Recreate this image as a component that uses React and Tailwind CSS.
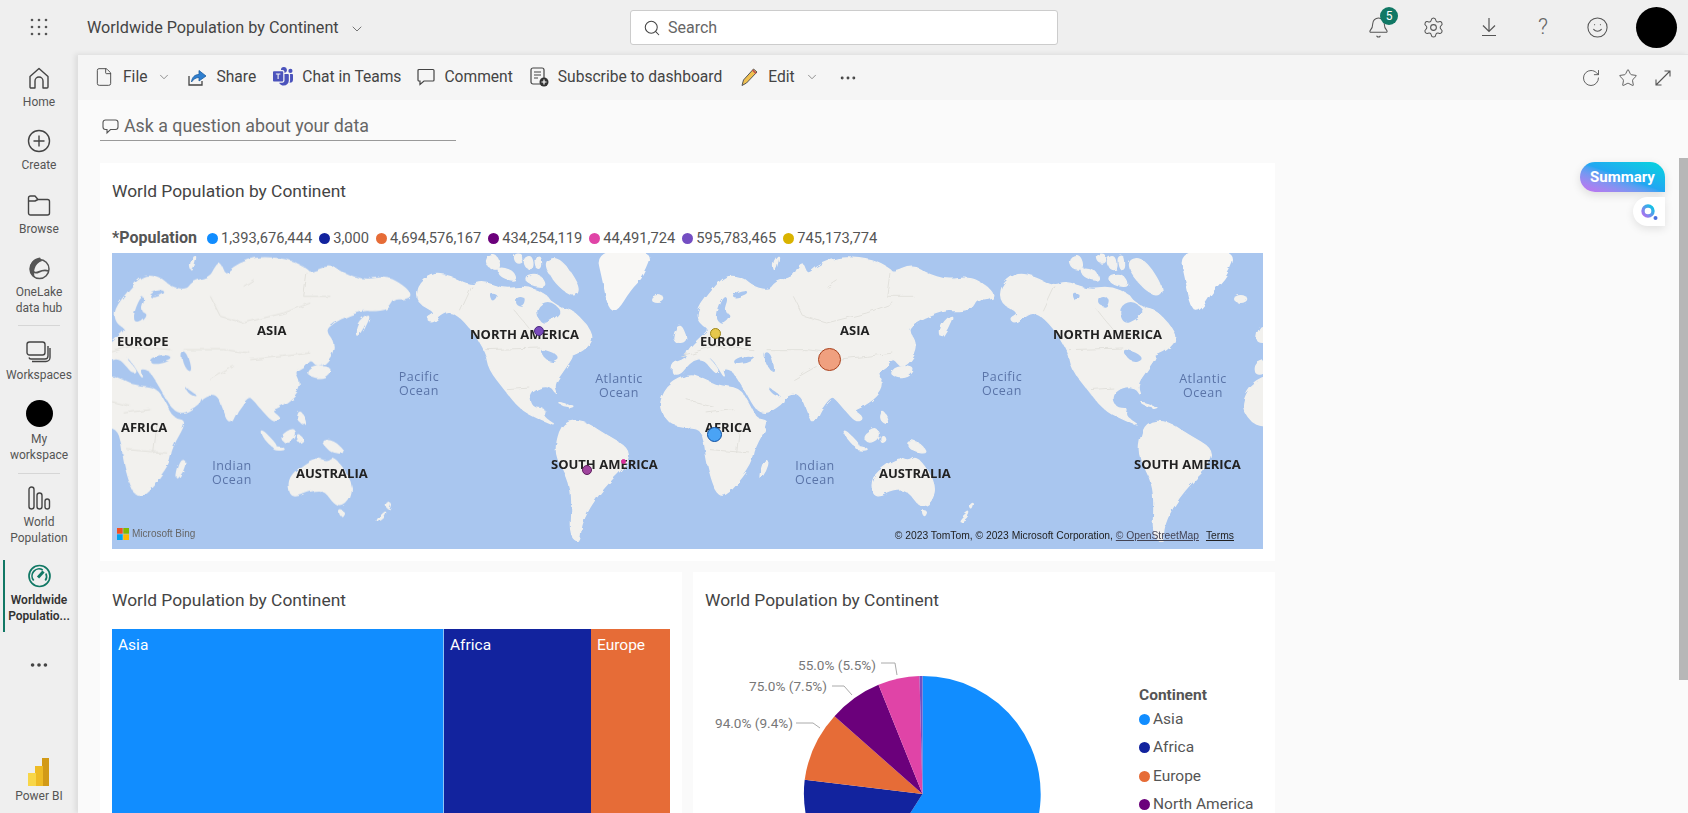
import { Bell, ChevronDown, Ellipsis, File, RotateCw, Search, Settings, Smile, Star } from 'lucide-react'
import { BsMicrosoftTeams } from 'react-icons/bs'

const LAND = '#f2f1ee'
const WATER = '#a9c6ef'
const LINE = '#e2e1dc'

// rounds the corners of a polygon outline so the coasts don't look cut with scissors
const smooth = (d) =>
  d
    .split('Z')
    .filter((s) => s.trim())
    .map((sub) => {
      const n = sub.match(/-?\d+(\.\d+)?/g).map(Number)
      const pts = []
      for (let i = 0; i < n.length; i += 2) pts.push([n[i], n[i + 1]])
      const mid = (a, b) => `${(a[0] + b[0]) / 2} ${(a[1] + b[1]) / 2}`
      let out = `M${mid(pts[pts.length - 1], pts[0])}`
      pts.forEach((p, i) => {
        out += ` Q${p[0]} ${p[1]} ${mid(p, pts[(i + 1) % pts.length])}`
      })
      return `${out} Z`
    })
    .join(' ')

const EURASIA =
  'M36 362 L38 330 L75 320 L85 290 L120 255 L150 228 L118 210 L112 170 L160 108 L200 66 L250 76 L285 105 L330 112 L345 88 L400 72 L412 48 L428 26 L442 68 L470 42 L510 22 L560 12 L640 22 L690 48 L700 62 L760 36 L800 62 L860 82 L930 72 L978 98 L1004 126 L985 138 L950 136 L935 168 L885 174 L862 170 L800 192 L760 215 L745 235 L772 270 L762 312 L725 348 L700 312 L680 340 L650 355 L672 395 L650 432 L600 465 L580 472 L612 495 L590 508 L555 470 L530 440 L515 428 L480 470 L460 518 L440 470 L425 430 L400 420 L370 435 L368 452 L300 492 L245 395 L225 365 L215 350 L185 345 L197 378 L170 335 L160 320 L140 308 L178 352 L165 360 L130 315 L100 320 L75 345 L60 364 Z'
const AFRICA =
  'M2 440 L28 393 L90 363 L140 383 L170 398 L238 405 L265 450 L290 500 L330 503 L282 585 L277 632 L215 712 L180 734 L158 690 L140 620 L135 570 L120 525 L70 520 L30 512 L2 472 Z'
const OLD_WORLD_ISLANDS =
  'M38 250 L60 208 L88 266 L50 274 Z M296 684 L310 624 L326 622 L318 654 Z M688 366 L710 340 L768 343 L740 378 Z M840 258 L843 214 L882 180 L862 228 Z M552 528 L602 578 L590 587 L554 546 Z M590 578 L632 590 L590 592 Z M610 550 L652 523 L657 556 L625 572 Z M663 543 L682 560 L663 572 Z M670 468 L692 522 L658 500 Z M733 563 L770 563 L808 602 L760 597 Z M345 60 L360 0 L338 30 Z M893 808 L930 770 L920 797 Z M929 757 L942 748 L936 772 Z M786 772 L802 776 L792 792 Z'
const AUSTRALIA =
  'M633 692 L650 658 L715 613 L750 628 L770 608 L828 690 L816 748 L780 763 L745 712 L705 710 L645 737 Z'
const OLD_WORLD_SEAS =
  'M165 195 L190 130 L205 135 L190 175 L215 185 L185 215 Z M220 320 L260 305 L290 315 L265 330 L225 335 Z M310 298 L332 298 L347 362 L320 342 Z M320 398 L368 432 L338 426 Z M215 125 L250 108 L268 120 L225 137 Z'
const NORTH_AMERICA =
  'M2 100 L45 62 L100 68 L160 100 L200 84 L260 110 L330 100 L388 125 L395 140 L435 168 L472 173 L535 250 L502 292 L450 312 L472 305 L440 352 L410 395 L422 428 L405 402 L370 400 L335 425 L345 466 L385 466 L375 490 L418 518 L400 512 L355 492 L310 467 L265 412 L215 347 L208 300 L160 222 L110 176 L80 180 L45 212 L28 195 L60 180 L2 150 Z'
const ARCTIC =
  'M205 15 L240 3 L252 50 L215 47 Z M240 42 L288 52 L300 86 L250 72 Z M320 15 L345 8 L350 48 L325 45 Z M352 12 L372 8 L375 50 L358 48 Z M382 22 L430 13 L494 110 L462 134 L400 72 Z M320 70 L365 60 L392 102 L340 97 Z M290 5 L315 2 L318 30 L296 30 Z'
const CARIBBEAN = 'M418 445 L467 460 L440 460 Z M455 460 L475 462 L460 468 Z'
const SOUTH_AMERICA =
  'M418 568 L438 508 L500 503 L560 543 L642 590 L622 642 L580 682 L530 742 L492 812 L488 876 L458 842 L463 760 L458 690 L418 612 Z'
const NEW_WORLD_SEAS =
  'M355 165 L395 140 L435 172 L410 200 L370 215 Z M362 285 L410 298 L432 320 L395 332 Z M215 115 L245 125 L225 150 Z M300 130 L330 135 L320 165 L295 155 Z'
const GREENLAND = 'M535 -10 L712 -10 L682 70 L642 110 L600 178 L573 167 L558 90 Z'

// one copy of the world, repeated across the map. coords are 3x map pixels
const World = () => (
  <g id="world">
    <g transform="translate(548 0) scale(.3333)" strokeLinejoin="round">
      <g fill={LAND} stroke={LAND} strokeWidth="4">
        <path d={smooth(EURASIA)} />
        <path d={smooth(AFRICA)} />
        <path d={smooth(OLD_WORLD_ISLANDS)} />
        <path d={smooth(AUSTRALIA)} />
      </g>
      <path fill={WATER} d={smooth(OLD_WORLD_SEAS)} />
      <path fill="none" stroke={LINE} strokeWidth="3" d="M400 130 L430 190 L500 210 L620 180 L700 150 M690 60 L680 130 L760 130 M500 100 L530 80 M320 290 L440 290 L520 300 M520 320 L620 310 L700 300 M140 480 L220 470 M150 590 L270 600 M240 510 L230 600 M400 380 L470 340 M80 440 L160 460 M60 310 L160 280 L280 290" />
    </g>
    <g transform="translate(888 0) scale(.3333)" strokeLinejoin="round">
      <g fill={LAND} stroke={LAND} strokeWidth="4">
        <path d={smooth(NORTH_AMERICA)} />
        <path d={smooth(ARCTIC)} />
        <path d={smooth(CARIBBEAN)} />
        <path d={smooth(SOUTH_AMERICA)} />
      </g>
      <path fill={WATER} d={smooth(NEW_WORLD_SEAS)} />
      <path fill="none" stroke={LINE} strokeWidth="3" d="M205 290 L370 285 M270 410 L340 405 M130 175 L165 100 M290 170 L340 230" />
      <path fill="#f8f7f5" d={smooth(GREENLAND)} />
      <ellipse cx="722" cy="138" rx="20" ry="12" fill={LAND} />
    </g>
  </g>
)

const MAP_LABELS = [
  ['EUROPE', 'left-[5px] top-[78px]'],
  ['ASIA', 'left-[145px] top-[67px]'],
  ['NORTH AMERICA', 'left-[358px] top-[71px]'],
  ['AFRICA', 'left-[9px] top-[164px]'],
  ['AUSTRALIA', 'left-[184px] top-[210px]'],
  ['SOUTH AMERICA', 'left-[439px] top-[201px]'],
  ['EUROPE', 'left-[588px] top-[78px]'],
  ['ASIA', 'left-[728px] top-[67px]'],
  ['NORTH AMERICA', 'left-[941px] top-[71px]'],
  ['AFRICA', 'left-[593px] top-[164px]'],
  ['AUSTRALIA', 'left-[767px] top-[210px]'],
  ['SOUTH AMERICA', 'left-[1022px] top-[201px]'],
]

const OCEANS = [
  ['Pacific', 'left-[277px] top-[117px]'],
  ['Atlantic', 'left-[477px] top-[119px]'],
  ['Indian', 'left-[90px] top-[206px]'],
  ['Pacific', 'left-[860px] top-[117px]'],
  ['Atlantic', 'left-[1061px] top-[119px]'],
  ['Indian', 'left-[673px] top-[206px]'],
]

const MARKERS = [
  'left-[598px] top-[75px] size-[11px] bg-[#e6c84c] border-[#9b8415]',
  'left-[595px] top-[174px] size-[15px] bg-[#4aa3f5] border-[#0d4ea0]',
  'left-[706px] top-[95px] size-[23px] bg-[#f0a07f] border-[#a8401c]',
  'left-[422px] top-[73px] size-[10px] bg-[#7a4bbd] border-[#4a2a80]',
  'left-[470px] top-[212px] size-[10px] bg-[#a0449e] border-[#5e1f5c]',
  'left-[509px] top-[206px] size-[5px] bg-[#d6309a] border-[#d6309a]',
]

const LEGEND = [
  ['bg-[#118dff]', '1,393,676,444'],
  ['bg-[#12239e]', '3,000'],
  ['bg-[#e66c37]', '4,694,576,167'],
  ['bg-[#6b007b]', '434,254,119'],
  ['bg-[#e044a7]', '44,491,724'],
  ['bg-[#744ec2]', '595,783,465'],
  ['bg-[#d9b300]', '745,173,774'],
]

const PIE_LEGEND = [
  ['bg-[#118dff]', 'Asia'],
  ['bg-[#12239e]', 'Africa'],
  ['bg-[#e66c37]', 'Europe'],
  ['bg-[#6b007b]', 'North America'],
]

const Waffle = () => (
  <svg width="18" height="18" viewBox="0 0 18 18" fill="#555">
    {[2, 9, 16].map((y) => [2, 9, 16].map((x) => <circle key={`${x}-${y}`} cx={x} cy={y} r="1.3" />))}
  </svg>
)

const HomeIcon = () => (
  <svg width="24" height="24" viewBox="0 0 24 24" fill="none" stroke="#444" strokeWidth="1.4">
    <path d="M3 10.5 L12 2.5 L21 10.5 V21 a1 1 0 0 1 -1 1 H16 V15 a4 4 0 0 0 -8 0 V22 H4 a1 1 0 0 1 -1 -1 Z" strokeLinejoin="round" />
  </svg>
)

const CreateIcon = () => (
  <svg width="24" height="24" viewBox="0 0 24 24" fill="none" stroke="#444" strokeWidth="1.4">
    <circle cx="12" cy="12" r="10.5" />
    <path d="M12 6.5 V17.5 M6.5 12 H17.5" />
  </svg>
)

const BrowseIcon = () => (
  <svg width="24" height="24" viewBox="0 0 24 24" fill="none" stroke="#444" strokeWidth="1.4">
    <path d="M1.5 20 V5 a2 2 0 0 1 2 -2 H8 L11 6.5 H20.5 a2 2 0 0 1 2 2 V20 a2 2 0 0 1 -2 2 H3.5 a2 2 0 0 1 -2 -2 Z M1.5 8 H8 L11 6.5" strokeLinejoin="round" />
  </svg>
)

const OneLakeIcon = () => (
  <svg width="24" height="24" viewBox="0 0 24 24" fill="none">
    <circle cx="12.5" cy="13" r="9.5" stroke="#555" strokeWidth="1.5" />
    <path d="M13 1.5 C7 2 2.5 7 3 14 C3.5 18 6 21 8 22 C6 16 7 8 15 5 Z" fill="#555" />
    <path d="M6.5 15.5 C10 20 13 12 21.5 15" stroke="#555" strokeWidth="1.8" />
  </svg>
)

const WorkspacesIcon = () => (
  <svg width="26" height="24" viewBox="0 0 26 24" fill="none" stroke="#444" strokeWidth="1.4">
    <rect x="1" y="3" width="18" height="13" rx="2.5" />
    <path d="M3 18.5 a2 2 0 0 0 2 1.5 H19 a3 3 0 0 0 3 -3 V7 M6 22.5 H20 a4 4 0 0 0 4 -4 V9" />
  </svg>
)

const BarsIcon = () => (
  <svg width="24" height="24" viewBox="0 0 24 24" fill="none" stroke="#444" strokeWidth="1.4">
    <rect x="2" y="1" width="5" height="22" rx="2.5" />
    <rect x="10" y="7" width="5" height="16" rx="2.5" />
    <rect x="18" y="13" width="4.5" height="10" rx="2.2" />
  </svg>
)

const GaugeIcon = () => (
  <svg width="25" height="24" viewBox="0 0 24 24" fill="none" stroke="#117865" strokeWidth="1.7">
    <circle cx="12" cy="12" r="10.5" />
    <path d="M6.2 16.5 a7 7 0 0 1 9 -10.5 M18.4 9.5 a7 7 0 0 1 -.6 7" />
    <path d="M10.5 13.5 L16 7.5" strokeWidth="3" />
  </svg>
)

const PowerBiIcon = () => (
  <svg width="24" height="28" viewBox="0 0 24 28">
    <rect x="15" y="0" width="7" height="28" fill="#d29a17" />
    <rect x="8" y="8" width="8" height="20" fill="#eebb25" />
    <rect x="1" y="15" width="8" height="13" fill="#f8d648" />
  </svg>
)

const ShareIcon = () => (
  <svg width="20" height="20" viewBox="0 0 20 20" fill="none">
    <path d="M2 9 V18 H15 V14" stroke="#444" strokeWidth="1.3" />
    <path d="M4.5 15 C5 10 8 7.5 12 7.5 V3.5 L19 9 L12 14 V10.5 C9 10.5 6.5 12 4.5 15 Z" fill="#2f7fd0" stroke="#1d5da0" strokeWidth=".8" />
  </svg>
)

const CommentIcon = () => (
  <svg width="18" height="18" viewBox="0 0 18 18" fill="none" stroke="#444" strokeWidth="1.2">
    <path d="M1 2.5 a1 1 0 0 1 1 -1 H16 a1 1 0 0 1 1 1 V12 a1 1 0 0 1 -1 1 H7 L3 16.5 V13 H2 a1 1 0 0 1 -1 -1 Z" />
  </svg>
)

const SubscribeIcon = () => (
  <svg width="19" height="20" viewBox="0 0 19 20" fill="none">
    <rect x="1" y="1" width="13" height="16" rx="2" stroke="#444" strokeWidth="1.2" />
    <path d="M4 5 H11 M4 8 H11 M4 11 H8" stroke="#444" strokeWidth="1.2" />
    <circle cx="14" cy="15" r="4.5" fill="#333" />
    <path d="M14 12.5 V17.5 M11.5 15 H16.5" stroke="#fff" strokeWidth="1.2" />
  </svg>
)

const PencilIcon = () => (
  <svg width="19" height="20" viewBox="0 0 19 20" fill="none">
    <path d="M3.5 13 L13.5 2 L17 5 L6.5 16 L2 18.5 Z" fill="#f0c050" stroke="#555" strokeWidth="1" />
    <path d="M12.5 3 L16 6.5" stroke="#c05050" strokeWidth="1.6" />
  </svg>
)

const DownloadIcon = () => (
  <svg width="16" height="20" viewBox="0 0 16 20" fill="none" stroke="#555" strokeWidth="1.2">
    <path d="M8 1 V14 M2 8.5 L8 14.5 L14 8.5 M1 18.5 H15" />
  </svg>
)

const ExpandIcon = () => (
  <svg width="16" height="16" viewBox="0 0 16 16" fill="none" stroke="#555" strokeWidth="1.1">
    <path d="M15 1 L1 15 M9.5 1 H15 V6.5 M1 9.5 V15 H6.5" />
  </svg>
)

const SmallComment = () => (
  <svg width="17" height="17" viewBox="0 0 17 17" fill="none" stroke="#555" strokeWidth="1.1">
    <path d="M3.5 2 H13.5 a2.5 2.5 0 0 1 2.5 2.5 V9 a2.5 2.5 0 0 1 -2.5 2.5 H8.5 L5 15 V11.5 H3.5 A2.5 2.5 0 0 1 1 9 V4.5 A2.5 2.5 0 0 1 3.5 2 Z" />
  </svg>
)

const MicrosoftLogo = () => (
  <svg width="12" height="12" viewBox="0 0 12 12">
    <rect width="5.7" height="5.7" fill="#f25022" />
    <rect x="6.3" width="5.7" height="5.7" fill="#7fba00" />
    <rect y="6.3" width="5.7" height="5.7" fill="#00a4ef" />
    <rect x="6.3" y="6.3" width="5.7" height="5.7" fill="#ffb900" />
  </svg>
)

const SummaryMark = () => (
  <svg width="20" height="20" viewBox="0 0 20 20" fill="none">
    <defs>
      <linearGradient id="ring" x1="0" y1="1" x2="1" y2="0">
        <stop offset="0" stopColor="#b56cf0" />
        <stop offset="1" stopColor="#06c8e6" />
      </linearGradient>
    </defs>
    <circle cx="9" cy="9" r="5" stroke="url(#ring)" strokeWidth="3.4" />
    <circle cx="16.5" cy="16" r="2" fill="#4a6fe0" />
  </svg>
)

const RailItem = ({ icon, label, className = '', active = false }) => (
  <div className={`flex flex-col items-center ${className}`}>
    <div className="h-6 flex items-center justify-center">{icon}</div>
    <div className={`mt-1 text-[12px] leading-4 text-center whitespace-pre-line ${active ? 'font-semibold text-[#333]' : 'text-[#555]'}`}>
      {label}
    </div>
  </div>
)

const ToolbarItem = ({ icon, label, className = '', chevron = false }) => (
  <div className={`flex items-center ${className}`}>
    {icon}
    <span className="ml-[9px] mt-[1px] text-[15.6px] text-[#444]">{label}</span>
    {chevron && <ChevronDown size={14} strokeWidth={1.2} className="ml-[10px] text-[#666]" />}
  </div>
)

const CardTitle = ({ children }) => (
  <div className="text-[17.4px] leading-6 text-[#444]">{children}</div>
)

const MapCard = () => (
  <div className="h-[398px] bg-white pt-4 px-3">
    <CardTitle>World Population by Continent</CardTitle>
    <div className="mt-[24px] flex items-center h-[22px] text-[14.7px] text-[#555]">
      <span className="text-[16px] font-bold mr-[10px]">*Population</span>
      {LEGEND.map(([color, value]) => (
        <span key={value} className="flex items-center mr-[7px]">
          <span className={`size-[11px] rounded-full mr-[3px] ${color}`} />
          {value}
        </span>
      ))}
    </div>
    <div className="relative mt-[4px] h-[296px] overflow-hidden bg-[#a9c6ef]">
      <svg className="w-full h-full blur-[0.5px]" viewBox="0 0 1151 296">
        <defs>
          {/* roughens the coast lines a little */}
          <filter id="coast" x="0" y="0" width="100%" height="100%">
            <feTurbulence type="fractalNoise" baseFrequency="0.09" numOctaves="3" seed="4" />
            <feDisplacementMap in="SourceGraphic" scale="5" />
          </filter>
        </defs>
        <g filter="url(#coast)">
          <World />
          <use href="#world" x="-583" />
          <use href="#world" x="583" />
        </g>
      </svg>
      {MAP_LABELS.map(([text, pos]) => (
        <span key={pos} className={`absolute ${pos} font-['Open_Sans',sans-serif] text-[13px] leading-5 font-bold text-[#222] whitespace-nowrap`}>
          {text}
        </span>
      ))}
      {OCEANS.map(([name, pos]) => (
        <span key={pos} className={`absolute ${pos} w-[60px] font-['Open_Sans',sans-serif] text-center text-[12.5px] leading-[14px] tracking-[0.5px] text-[#5a74a8]`}>
          {name}
          <br />
          Ocean
        </span>
      ))}
      {MARKERS.map((cls) => (
        <span key={cls} className={`absolute rounded-full border ${cls}`} />
      ))}
      <div className="absolute left-[5px] bottom-[8px] flex items-center gap-[3px]">
        <MicrosoftLogo />
        <span className="font-['Liberation_Sans',sans-serif] text-[10px] text-[#666]">Microsoft Bing</span>
      </div>
      <div className="absolute right-[29px] bottom-[6px] font-['Liberation_Sans',sans-serif] text-[10.3px] text-[#222] whitespace-nowrap">
        © 2023 TomTom, © 2023 Microsoft Corporation, <span className="underline text-[#445]">© OpenStreetMap</span>
        <span className="underline ml-[7px]">Terms</span>
      </div>
    </div>
  </div>
)

const TreemapCard = () => (
  <div className="w-[582px] h-[400px] bg-white pt-4 px-3">
    <CardTitle>World Population by Continent</CardTitle>
    <div className="mt-[17px] flex h-[300px] text-[15.5px] text-white">
      <div className="w-[332px] bg-[#118dff] border-r border-[#8ec4f5] pl-[6px] pt-[5px]">Asia</div>
      <div className="w-[147px] bg-[#12239e] pl-[6px] pt-[5px]">Africa</div>
      <div className="flex-1 bg-[#e66c37] pl-[6px] pt-[5px]">Europe</div>
    </div>
  </div>
)

const PieCard = () => (
  <div className="w-[582px] h-[400px] bg-white pt-4 px-3">
    <CardTitle>World Population by Continent</CardTitle>
    <div className="mt-[17px] flex">
      <div className="relative w-[434px] h-[300px]">
        {/* center of the pie is at 217.5,165 in this box */}
        <svg className="absolute inset-0" width="434" height="300" viewBox="0 0 434 300" fill="none">
          <path d="M217.5 165 L217.5 47 A118 118 0 1 1 154.1 264.4 Z" fill="#118dff" />
          <path d="M217.5 165 L154.1 264.4 A118 118 0 0 1 99.7 150.7 Z" fill="#12239e" />
          <path d="M217.5 165 L99.7 150.7 A118 118 0 0 1 129.5 87.3 Z" fill="#e66c37" />
          <path d="M217.5 165 L129.5 87.3 A118 118 0 0 1 173.5 55.7 Z" fill="#6b007b" />
          <path d="M217.5 165 L173.5 55.7 A118 118 0 0 1 214.5 47 Z" fill="#e044a7" />
          <path d="M217.5 165 L214.5 47 A118 118 0 0 1 217.5 47 Z" fill="#744ec2" />
          <path d="M91 94 L108 94 L115 99 M127 57 L139 57 L147 66 M176 34 L190 34 L192 46" stroke="#aaa" strokeWidth="1" />
        </svg>
        <span className="absolute left-[93px] top-[26px] text-[13.6px] leading-5 text-[#777] whitespace-nowrap">55.0% (5.5%)</span>
        <span className="absolute left-[44px] top-[47px] text-[13.6px] leading-5 text-[#777] whitespace-nowrap">75.0% (7.5%)</span>
        <span className="absolute left-[10px] top-[84px] text-[13.6px] leading-5 text-[#777] whitespace-nowrap">94.0% (9.4%)</span>
      </div>
      <div className="pt-[56px] text-[15.5px] text-[#555]">
        <div className="font-bold leading-5">Continent</div>
        {PIE_LEGEND.map(([color, label]) => (
          <div key={label} className="flex items-center h-[28.5px] whitespace-nowrap">
            <span className={`size-[11px] rounded-full mr-[3px] ${color}`} />
            {label}
          </div>
        ))}
      </div>
    </div>
  </div>
)

export default function App() {
  return (
    <div className="relative h-screen flex flex-col overflow-hidden bg-[#efefef] font-['Roboto',sans-serif]">
      {/* top bar */}
      <header className="h-[54px] flex-none flex items-center relative">
        <div className="w-[77px] flex justify-center -mt-[1px]">
          <Waffle />
        </div>
        <div className="ml-[10px] mt-[3px] text-[16.2px] text-[#444] whitespace-nowrap">Worldwide Population by Continent</div>
        <ChevronDown size={16} strokeWidth={1.2} className="ml-[10px] mt-[3px] text-[#555]" />
        <div className="absolute left-[630px] top-[10px] w-[428px] h-[35px] flex items-center bg-white border border-[#ccc] rounded-[3px] pl-[12px]">
          <Search size={18} strokeWidth={1.4} className="text-[#444]" />
          <span className="ml-[7px] mt-[1px] text-[16px] text-[#666]">Search</span>
        </div>
        <div className="ml-auto flex items-center mr-[11px]">
          <div className="relative w-[55px] flex justify-center">
            <Bell size={23} strokeWidth={1.1} className="text-[#555]" />
            <span className="absolute left-[29px] -top-[9px] size-[18px] rounded-full bg-[#117865] text-white text-[12px] flex items-center justify-center">5</span>
          </div>
          <div className="w-[55px] flex justify-center">
            <Settings size={23} strokeWidth={1.1} className="text-[#555]" />
          </div>
          <div className="w-[55px] flex justify-center">
            <DownloadIcon />
          </div>
          <div className="w-[54px] text-center text-[22px] font-light leading-6 text-[#666]">?</div>
          <div className="w-[54px] flex justify-center">
            <Smile size={23} strokeWidth={1.1} className="text-[#555]" />
          </div>
          <div className="ml-[12px] size-[41px] rounded-full bg-black" />
        </div>
      </header>

      <div className="flex-1 flex min-h-0">
        {/* left rail */}
        <nav className="relative w-[78px] flex-none flex flex-col">
          <RailItem icon={<HomeIcon />} label="Home" className="mt-[12px]" />
          <RailItem icon={<CreateIcon />} label="Create" className="mt-[19px]" />
          <RailItem icon={<BrowseIcon />} label="Browse" className="mt-[20px]" />
          <RailItem icon={<OneLakeIcon />} label={'OneLake\ndata hub'} className="mt-[19px]" />
          <div className="mt-[9px] mx-[18px] h-px bg-[#d6d6d6]" />
          <RailItem icon={<WorkspacesIcon />} label="Workspaces" className="mt-[13px]" />
          <div className="mt-[17px] mx-auto size-[27px] rounded-full bg-black" />
          <div className="mt-1 text-[12px] leading-4 text-center text-[#555]">
            My
            <br />
            workspace
          </div>
          <div className="mt-[10px] mx-[18px] h-px bg-[#d6d6d6]" />
          <RailItem icon={<BarsIcon />} label={'World\nPopulation'} className="mt-[12px]" />
          <RailItem icon={<GaugeIcon />} label={'Worldwide\nPopulatio...'} active className="mt-[18px]" />
          <Ellipsis size={22} className="mx-auto mt-[30px] text-[#444]" />
          <RailItem icon={<PowerBiIcon />} label="Power BI" className="mt-auto mb-[9px]" />
          <span className="absolute left-[3px] top-[506px] w-[2px] h-[72px] bg-[#117865]" />
        </nav>

        {/* main area */}
        <main className="flex-1 min-w-0 flex flex-col bg-[#fafafa] shadow-[-3px_0_5px_rgba(0,0,0,0.08)] border-t border-[#e4e4e4]">
          <div className="h-[45px] flex-none flex items-center bg-[#f5f5f5] pl-[16px] pr-[17px]">
            <ToolbarItem icon={<File size={20} strokeWidth={1.1} className="text-[#444]" />} label="File" chevron />
            <ToolbarItem icon={<ShareIcon />} label="Share" className="ml-[16px]" />
            <ToolbarItem icon={<BsMicrosoftTeams size={20} className="text-[#4b53bc]" />} label="Chat in Teams" className="ml-[17px]" />
            <ToolbarItem icon={<CommentIcon />} label="Comment" className="ml-[16px]" />
            <ToolbarItem icon={<SubscribeIcon />} label="Subscribe to dashboard" className="ml-[17px]" />
            <ToolbarItem icon={<PencilIcon />} label="Edit" chevron className="ml-[18px]" />
            <Ellipsis size={20} strokeWidth={1.5} className="ml-[19px] text-[#444]" />
            <div className="ml-auto flex items-center gap-[17px]">
              <RotateCw size={20} strokeWidth={1.1} className="text-[#555]" />
              <Star size={20} strokeWidth={1.1} className="text-[#555]" />
              <ExpandIcon />
            </div>
          </div>

          <div className="flex-1 min-h-0 pl-[22px]">
            <div className="w-[356px] h-[41px] pt-[12px] flex items-center border-b border-[#999] pl-[2px]">
              <SmallComment />
              <span className="ml-[5px] text-[17.8px] text-[#666] whitespace-nowrap">Ask a question about your data</span>
            </div>
            <div className="w-[1175px] mt-[22px]">
              <MapCard />
              <div className="mt-[11px] flex justify-between">
                <TreemapCard />
                <PieCard />
              </div>
            </div>
          </div>
        </main>
      </div>

      {/* floating summary tab */}
      <div className="absolute left-[1580px] top-[162px] w-[85px] h-[30px] pt-[1px] flex items-center justify-center rounded-tl-[16px] rounded-bl-[16px] rounded-tr-[16px] bg-linear-to-tr from-[#c56cf0] via-[#22a6f2] to-[#04d6dc] text-[15px] font-bold text-white shadow-[0_3px_10px_rgba(0,0,0,0.12)]">
        Summary
      </div>
      <div className="absolute left-[1633px] top-[197px] w-[32px] h-[29px] flex items-center justify-center rounded-l-full bg-white shadow-[0_3px_8px_rgba(0,0,0,0.1)]">
        <SummaryMark />
      </div>

      {/* page scrollbar thumb */}
      <div className="absolute right-0 top-[158px] w-[9px] h-[522px] bg-[#b7b7b7]" />
    </div>
  )
}
